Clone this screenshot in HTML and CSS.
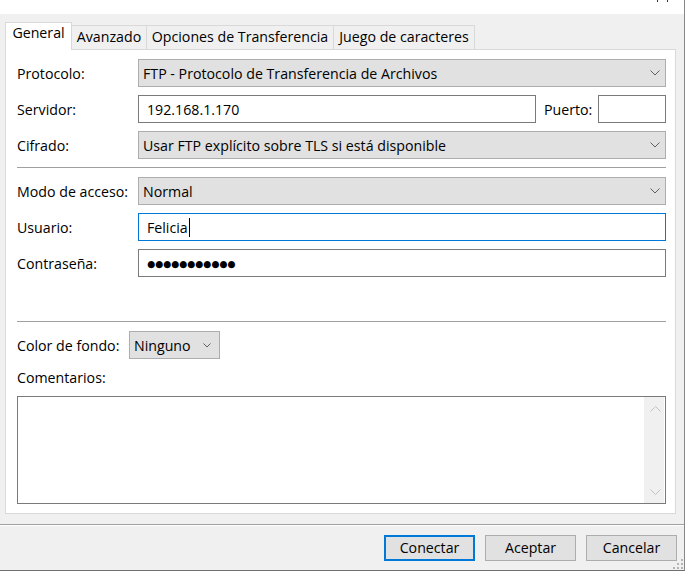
FILE: index.html
```html
<!DOCTYPE html>
<html lang="es">
<head>
<meta charset="utf-8">
<title>Gestor de sitios</title>
<link rel="stylesheet" href="styles.css">
</head>
<body>
<div class="screen">
  <div class="titlebar">
    <span class="caption-mark"></span><span class="caption-mark"></span>
  </div>
  <div class="window">
    <div class="tabs">
      <div class="tab tab-general active">General</div>
      <div class="tab tab-avanzado">Avanzado</div>
      <div class="tab tab-opciones">Opciones de Transferencia</div>
      <div class="tab tab-juego">Juego de caracteres</div>
    </div>
    <div class="panel">
      <div class="row">
        <span class="lbl">Protocolo:</span>
        <div class="select fill"><span class="val">FTP - Protocolo de Transferencia de Archivos</span><svg class="chev" width="10" height="6" viewBox="0 0 10 6"><polyline points="0.5,0.5 5,5 9.5,0.5" fill="none" stroke="#606060" stroke-width="1"/></svg></div>
      </div>
      <div class="row gap">
        <span class="lbl">Servidor:</span>
        <div class="input server">192.168.1.170</div>
        <span class="port-lbl">Puerto:</span>
        <div class="input port"></div>
      </div>
      <div class="row gap">
        <span class="lbl">Cifrado:</span>
        <div class="select fill"><span class="val">Usar FTP explícito sobre TLS si está disponible</span><svg class="chev" width="10" height="6" viewBox="0 0 10 6"><polyline points="0.5,0.5 5,5 9.5,0.5" fill="none" stroke="#606060" stroke-width="1"/></svg></div>
      </div>
      <div class="sep sep-a"></div>
      <div class="row gap-9">
        <span class="lbl">Modo de acceso:</span>
        <div class="select fill"><span class="val">Normal</span><svg class="chev" width="10" height="6" viewBox="0 0 10 6"><polyline points="0.5,0.5 5,5 9.5,0.5" fill="none" stroke="#606060" stroke-width="1"/></svg></div>
      </div>
      <div class="row gap">
        <span class="lbl">Usuario:</span>
        <div class="input fill focused"><span>Felicia</span><span class="caret"></span></div>
      </div>
      <div class="row gap">
        <span class="lbl">Contraseña:</span>
        <div class="input fill"><span class="dots">●●●●●●●●●●●</span></div>
      </div>
      <div class="sep sep-b"></div>
      <div class="row gap-9">
        <span class="lbl lbl-short">Color de fondo:</span>
        <div class="select small"><span class="val">Ninguno</span><svg class="chev" width="8" height="5" viewBox="0 0 8 5"><polyline points="0.5,0.5 4,4 7.5,0.5" fill="none" stroke="#606060" stroke-width="1"/></svg></div>
      </div>
      <div class="comments-lbl">Comentarios:</div>
      <div class="textarea">
        <div class="tx-body"></div>
        <div class="vscroll">
          <svg width="11" height="6" viewBox="0 0 11 6"><polyline points="0.5,5.5 5.5,0.5 10.5,5.5" fill="none" stroke="#c2c2c2" stroke-width="1"/></svg>
          <svg width="11" height="6" viewBox="0 0 11 6"><polyline points="0.5,0.5 5.5,5.5 10.5,0.5" fill="none" stroke="#c2c2c2" stroke-width="1"/></svg>
        </div>
      </div>
    </div>
    <div class="bottom-sep"></div>
    <div class="buttons">
      <div class="btn default">Conectar</div>
      <div class="btn">Aceptar</div>
      <div class="btn">Cancelar</div>
    </div>
    <svg class="grip" width="10" height="10" viewBox="0 0 10 10">
      <rect x="8" y="0" width="2" height="2" fill="#b4b4b4"/>
      <rect x="4" y="4" width="2" height="2" fill="#b4b4b4"/>
      <rect x="8" y="4" width="2" height="2" fill="#b4b4b4"/>
      <rect x="0" y="8" width="2" height="2" fill="#b4b4b4"/>
      <rect x="4" y="8" width="2" height="2" fill="#b4b4b4"/>
      <rect x="8" y="8" width="2" height="2" fill="#b4b4b4"/>
    </svg>
  </div>
</div>
</body>
</html>
```
FILE: styles.css
```css
* { box-sizing: border-box; }
html, body { margin: 0; padding: 0; background: #ffffff; }
body {
  font-family: "Segoe UI", "Open Sans", "Noto Sans", sans-serif;
  font-size: 14.2px;
  color: #000;
  width: 687px;
  height: 571px;
  overflow: hidden;
}
.screen { width: 687px; height: 571px; }
.titlebar {
  height: 14px;
  width: 685px;
  background: #fff;
  border-right: 1px solid #888;
  display: flex;
  justify-content: flex-end;
  gap: 9px;
  padding-right: 16px;
}
.caption-mark { width: 1px; height: 2px; background: #333; }
.window {
  position: relative;
  width: 685px;
  height: 557px;
  background: #f0f0f0;
  border-right: 1px solid #888;
  border-bottom: 1px solid #707070;
  padding-top: 8px;
}
.tabs {
  display: flex;
  align-items: flex-end;
  height: 28px;
  margin-bottom: -1px;
  padding-left: 5px;
  position: relative;
  z-index: 1;
}
.tab {
  height: 24px;
  margin-bottom: 1px;
  border: 1px solid #d9d9d9;
  border-bottom: none;
  background: #f0f0f0;
  text-align: center;
  line-height: 22px;
  white-space: nowrap;
  margin-left: -1px;
}
.tab.active {
  height: 28px;
  margin-bottom: 0;
  background: #fff;
  line-height: 19px;
  margin-left: 0;
}
.tab-general { width: 67px; }
.tab-avanzado { width: 76px; }
.tab-opciones { width: 188px; }
.tab-juego { width: 142px; }

.panel {
  margin-left: 5px;
  width: 671px;
  height: 465px;
  background: #fff;
  border: 1px solid #d9d9d9;
  padding: 9px 9px 9px 11px;
  display: flex;
  flex-direction: column;
}
.row {
  display: flex;
  align-items: center;
  height: 28px;
  flex: none;
}
.row.gap { margin-top: 8px; }
.row.gap-9 { margin-top: 9px; }
.lbl { width: 121px; flex: none; white-space: nowrap; }
.lbl-short { width: 112px; }
.select {
  height: 28px;
  background: #e1e1e1;
  border: 1px solid #adadad;
  display: flex;
  align-items: center;
  padding: 0 5px 0 4px;
  white-space: nowrap;
}
.select .val { flex: 1; }
.select.fill { flex: 1; }
.select.small { width: 91px; padding-right: 8px; }
.chev { flex: none; }
.input {
  height: 28px;
  background: #fff;
  border: 1px solid #7a7a7a;
  display: flex;
  align-items: center;
  padding-left: 8px;
  white-space: nowrap;
}
.input.fill { flex: 1; }
.input.server { width: 398px; }
.port-lbl { margin-left: 8px; }
.input.port { width: 68px; margin-left: auto; }
.input.focused { border-color: #0078d7; }
.caret { width: 1px; height: 19px; background: #000; margin-left: 1px; }
.dots { font-family: "DejaVu Sans", sans-serif; font-size: 9.2px; letter-spacing: 0px; }
.sep { height: 1px; background: #a0a0a0; flex: none; }
.sep-a { margin-top: 8px; }
.sep-b { margin-top: 44px; }
.comments-lbl { margin-top: 9px; height: 20px; line-height: 20px; flex: none; }
.textarea {
  margin-top: 8px;
  height: 108px;
  border: 1px solid #7a7a7a;
  background: #fff;
  display: flex;
  flex: none;
}
.tx-body { flex: 1; }
.vscroll {
  width: 20px;
  background: #f0f0f0;
  margin-right: 1px;
  display: flex;
  flex-direction: column;
  justify-content: space-between;
  align-items: center;
  padding: 9px 0 8px 2px;
}
.bottom-sep {
  margin-top: 10px;
  height: 1px;
  background: #a0a0a0;
  box-shadow: 0 1px 0 #fff;
}
.buttons {
  margin-top: 10px;
  display: flex;
  justify-content: flex-end;
  gap: 10px;
  padding-right: 7px;
}
.btn {
  width: 91px;
  height: 26px;
  background: #e1e1e1;
  border: 1px solid #adadad;
  text-align: center;
  line-height: 24px;
}
.btn.default { border: 2px solid #0078d7; line-height: 22px; }
.grip { position: absolute; right: 1px; bottom: 1px; }
```
